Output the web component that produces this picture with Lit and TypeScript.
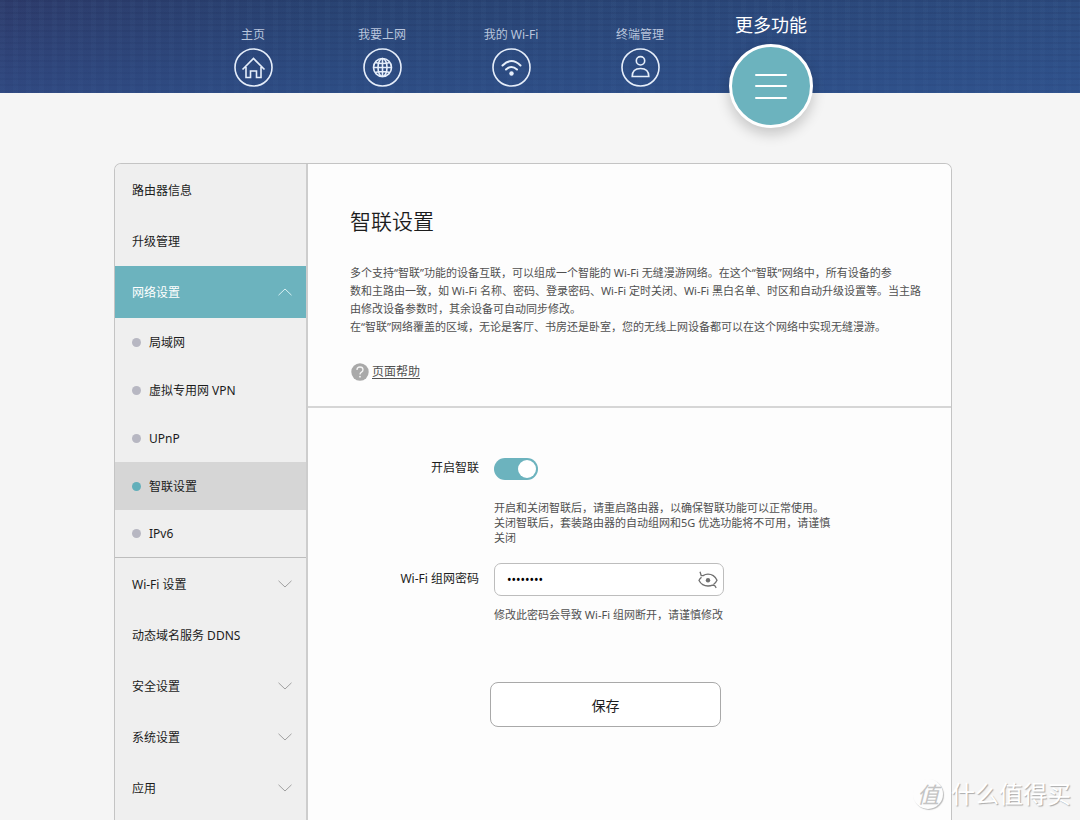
import { LitElement, html, css, svg, nothing } from "lit";
import { customElement, state } from "lit/decorators.js";
import { classMap } from "lit/directives/class-map.js";

interface NavItem {
  label: string;
  icon: unknown;
}

interface MenuItem {
  label: string;
  expandable?: boolean;
  children?: string[];
}

const NAV: NavItem[] = [
  {
    label: "主页",
    icon: svg`<path d="M8.5 21.5 19.5 10.5l11 11M12 19V29.5h4.5V23h6v6.5H27V19" />`,
  },
  {
    label: "我要上网",
    icon: svg`<circle cx="19.5" cy="19.5" r="9" /><ellipse cx="19.5" cy="19.5" rx="4.5" ry="9" /><path d="M19.5 10.5v18M10.5 19.5h18M12 14.5q7.5 2 15 0M12 24.5q7.5-2 15 0" />`,
  },
  {
    label: "我的 Wi-Fi",
    icon: svg`<path d="M10.5 17.5q9-9 18 0M14 21.5q5.5-5 11 0" stroke-linecap="round" stroke-width="2" /><circle class="solid" cx="19.5" cy="25.5" r="2.2" />`,
  },
  {
    label: "终端管理",
    icon: svg`<circle cx="19.5" cy="12.8" r="4.2" /><path d="M11.2 28.500q0-8 8.300-8t8.300 8z" />`,
  },
];

const MENU: MenuItem[] = [
  { label: "路由器信息" },
  { label: "升级管理" },
  {
    label: "网络设置",
    expandable: true,
    children: ["局域网", "虚拟专用网 VPN", "UPnP", "智联设置", "IPv6"],
  },
  { label: "Wi-Fi 设置", expandable: true },
  { label: "动态域名服务 DDNS" },
  { label: "安全设置", expandable: true },
  { label: "系统设置", expandable: true },
  { label: "应用", expandable: true },
];

@customElement("top-nav")
export class TopNav extends LitElement {
  static styles = css`
    :host {
      display: block;
      position: relative;
      z-index: 1;
      height: 93px;
      background:
        linear-gradient(to bottom, transparent, rgba(52, 92, 160, 0.4)),
        repeating-linear-gradient(to bottom, rgba(20, 30, 70, 0.12) 0 2px, transparent 2px 6px),
        repeating-linear-gradient(to right, rgba(90, 130, 175, 0.06) 0 5px, transparent 5px 13px),
        linear-gradient(to right, #2e3c6c, #294372 30%, #2d4c80);
    }
    .items {
      display: flex;
      justify-content: center;
      height: 100%;
      padding-right: 54px;
    }
    .item {
      display: flex;
      flex-direction: column;
      align-items: center;
      width: 129px;
      padding-top: 26px;
      color: #b9c5dc;
      font-size: 12px;
      line-height: 18px;
      text-decoration: none;
    }
    .ring {
      width: 39px;
      height: 39px;
      margin-top: 4px;
      fill: none;
      stroke: #e6eefa;
      stroke-width: 1.6;
    }
    .solid {
      fill: #e6eefa;
      stroke: none;
    }
    .current {
      width: 133px;
      padding-top: 13px;
      color: #fff;
      font-size: 18px;
      line-height: 24px;
    }
    .disc {
      box-sizing: border-box;
      display: grid;
      place-items: center;
      flex: none;
      width: 84px;
      height: 84px;
      margin-top: 7px;
      border: 3px solid #fff;
      border-radius: 50%;
      background: #6cb3be;
      box-shadow: 0 6px 14px rgba(0, 0, 0, 0.2);
    }
    .bars {
      width: 32px;
      height: 28px;
      fill: none;
      stroke: #fff;
      stroke-width: 2;
      stroke-linecap: round;
    }
  `;

  render() {
    return html`
      <nav class="items">
        ${NAV.map(
          (item) => html`
            <a class="item" href="#">
              <span>${item.label}</span>
              <svg class="ring" viewBox="0 0 39 39" aria-hidden="true">
                <circle cx="19.5" cy="19.5" r="18.5" />
                ${item.icon}
              </svg>
            </a>
          `,
        )}
        <a class="item current" href="#" aria-current="page">
          <span>更多功能</span>
          <span class="disc">
            <svg class="bars" viewBox="0 0 32 28" aria-hidden="true">
              <path d="M1 3h30M1 14h30M1 26h30" />
            </svg>
          </span>
        </a>
      </nav>
    `;
  }
}

@customElement("side-menu")
export class SideMenu extends LitElement {
  @state() private selected = "智联设置";

  static styles = css`
    :host {
      display: block;
      box-sizing: border-box;
      border-right: 2px solid #cdcdcd;
      background: #efefef;
    }
    ul {
      margin: 0;
      padding: 0;
      list-style: none;
    }
    button {
      display: flex;
      align-items: center;
      width: 100%;
      border: 0;
      background: none;
      color: #1c1c1c;
      font: inherit;
      text-align: left;
      cursor: pointer;
    }
    .entry {
      height: 51px;
      padding: 0 14px 0 17px;
    }
    .group {
      justify-content: space-between;
    }
    .open {
      height: 52px;
      background: #6cb3be;
      color: #fff;
    }
    .chevron {
      width: 14px;
      height: 8px;
      fill: none;
      stroke: #a0a0a0;
    }
    .open .chevron {
      stroke: #d8f0f3;
      transform: rotate(180deg);
    }
    .sub {
      box-sizing: border-box;
      height: 240px;
      border-bottom: 1px solid #bdbdbd;
    }
    .child {
      gap: 8px;
      height: 48px;
      padding: 0 17px;
    }
    .sub li:last-child .child {
      height: 47px;
    }
    .child::before {
      content: "";
      width: 9px;
      height: 9px;
      border-radius: 50%;
      background: #b7b7c2;
    }
    .chosen {
      background: #d6d6d6;
    }
    .chosen::before {
      background: #62afba;
    }
  `;

  render() {
    return html`
      <ul>
        ${MENU.map(
          (item) => html`
            <li>
              <button
                class=${classMap({ entry: true, group: !!item.expandable, open: !!item.children })}
              >
                ${item.label}
                ${item.expandable
                  ? html`<svg class="chevron" viewBox="0 0 14 8" aria-hidden="true">
                      <path d="M.5.8 7 7 13.5.8" />
                    </svg>`
                  : nothing}
              </button>
              ${item.children
                ? html`<ul class="sub">
                    ${item.children.map(
                      (name) => html`<li>
                        <button
                          class=${classMap({ child: true, chosen: name === this.selected })}
                          @click=${() => (this.selected = name)}
                        >
                          ${name}
                        </button>
                      </li>`,
                    )}
                  </ul>`
                : nothing}
            </li>
          `,
        )}
      </ul>
    `;
  }
}

@customElement("mesh-settings")
export class MeshSettings extends LitElement {
  @state() private reveal = false;

  static styles = css`
    :host {
      display: block;
      background: #fdfdfd;
      color: #1c1c1c;
    }
    .intro {
      padding: 41px 16px 21px 42px;
      border-bottom: 2px solid #d6d6d6;
    }
    h1 {
      margin: 0;
      font-size: 21px;
      font-weight: 350;
      line-height: 32px;
    }
    .about {
      margin: 27px 0 0;
      color: #505050;
      font-size: 11px;
      line-height: 18px;
      white-space: nowrap;
    }
    .help {
      display: inline-flex;
      align-items: center;
      gap: 3px;
      margin: 27px 0 0 1px;
      color: #505050;
      text-decoration: none;
      line-height: 18px;
    }
    .help span {
      text-decoration: underline;
      text-underline-offset: 2px;
    }
    .mark {
      width: 18px;
      height: 18px;
    }
    form {
      display: grid;
      grid-template-columns: 171px 1fr;
      column-gap: 15px;
      padding-top: 49px;
    }
    label {
      line-height: 22px;
      text-align: right;
    }
    .switch {
      appearance: none;
      display: flex;
      align-items: center;
      justify-content: flex-end;
      box-sizing: border-box;
      width: 44px;
      height: 22px;
      margin: 1px 0 0;
      padding: 2px;
      border-radius: 11px;
      background: #bcbcbc;
      cursor: pointer;
    }
    .switch:checked {
      background: #6cb3be;
    }
    .switch::before {
      content: "";
      width: 18px;
      height: 18px;
      border-radius: 50%;
      background: #fff;
    }
    .switch:not(:checked) {
      justify-content: flex-start;
    }
    .hint {
      grid-column: 2;
      margin: 0;
      color: #505050;
      font-size: 11px;
      line-height: 15px;
      white-space: nowrap;
    }
    .mesh {
      margin-top: 20px;
    }
    .secret-label,
    .secret {
      margin-top: 18px;
    }
    .secret-label {
      line-height: 32px;
    }
    .secret {
      display: flex;
      align-items: center;
      box-sizing: border-box;
      width: 230px;
      height: 33px;
      padding: 0 5px 0 12px;
      border: 1px solid #bdbdbd;
      border-radius: 7px;
      background: #fff;
    }
    .secret input {
      flex: 1;
      min-width: 0;
      padding: 0;
      border: 0;
      outline: 0;
      background: none;
      color: #000;
      font: inherit;
    }
    .eye {
      padding: 0;
      border: 0;
      background: none;
      line-height: 0;
      cursor: pointer;
    }
    .eye svg {
      width: 20px;
      height: 18px;
      fill: none;
      stroke: #707070;
      stroke-width: 1.3;
    }
    .eye .pupil {
      fill: #707070;
      stroke: none;
    }
    .warn {
      margin-top: 11px;
    }
    .save {
      grid-column: 2;
      width: 231px;
      height: 45px;
      margin: 60px 0 0 -4px;
      border: 1px solid #a9a9a9;
      border-radius: 8px;
      background: #fff;
      color: #1c1c1c;
      font: inherit;
      font-size: 14px;
      cursor: pointer;
    }
  `;

  render() {
    return html`
      <section class="intro">
        <h1>智联设置</h1>
        <p class="about">
          多个支持“智联”功能的设备互联，可以组成一个智能的 Wi-Fi 无缝漫游网络。在这个“智联”网络中，所有设备的参<br />数和主路由一致，如
          Wi-Fi 名称、密码、登录密码、Wi-Fi 定时关闭、Wi-Fi 黑白名单、时区和自动升级设置等。当主路<br />由修改设备参数时，其余设备可自动同步修改。<br />在“智联”网络覆盖的区域，无论是客厅、书房还是卧室，您的无线上网设备都可以在这个网络中实现无缝漫游。
        </p>
        <a class="help" href="#">
          <svg class="mark" viewBox="0 0 18 18" aria-hidden="true">
            <circle cx="9" cy="9" r="8.7" fill="#a9a9a9" />
            <path
              d="M6 7q0-3 3-3t3 2.700q0 1.500-1.500 2.400T9 11.500"
              fill="none"
              stroke="#f4f4f4"
              stroke-width="1.3"
            />
            <circle cx="9" cy="13.7" r=".9" fill="#f4f4f4" />
          </svg>
          <span>页面帮助</span>
        </a>
      </section>
      <form @submit=${(e: Event) => e.preventDefault()}>
        <label for="mesh">开启智联</label>
        <input class="switch" id="mesh" type="checkbox" role="switch" checked />
        <p class="hint mesh">
          开启和关闭智联后，请重启路由器，以确保智联功能可以正常使用。<br />关闭智联后，套装路由器的自动组网和5G
          优选功能将不可用，请谨慎<br />关闭
        </p>
        <label class="secret-label" for="secret">Wi-Fi 组网密码</label>
        <div class="secret">
          <input
            id="secret"
            type=${this.reveal ? "text" : "password"}
            value="12345678"
            autocomplete="off"
          />
          <button
            class="eye"
            type="button"
            aria-label="显示密码"
            @click=${() => (this.reveal = !this.reveal)}
          >
            <svg viewBox="0 0 20 18" aria-hidden="true">
              <path
                d="M2 .8 3.200 4.500 5.200 4.600Q7.200 3.200 10 3.200q6 0 9 6-1 2.300-3.500 4.200M3.500 6.200Q1.500 8 1 9.500 4 15 10 15q2.500 0 4.500-.8l2.200.3 1.500 2.300"
              />
              <circle class="pupil" cx="10" cy="9.2" r="2.2" />
            </svg>
          </button>
        </div>
        <p class="hint warn">修改此密码会导致 Wi-Fi 组网断开，请谨慎修改</p>
        <button class="save" type="submit">保存</button>
      </form>
    `;
  }
}

@customElement("app-root")
export class AppRoot extends LitElement {
  static styles = css`
    :host {
      display: flex;
      flex-direction: column;
      position: relative;
      min-height: 100vh;
      background: #f5f5f5;
      font-family: "Noto Sans", "Noto Sans CJK SC", sans-serif;
      font-size: 12px;
    }
    main {
      display: grid;
      grid-template-columns: 193px 1fr;
      flex: 1;
      margin: 70px 128px 0 114px;
      border: 1px solid #c4c4c4;
      border-bottom: 0;
      border-radius: 7px 7px 0 0;
      overflow: hidden;
    }
    .stamp {
      position: absolute;
      right: 9px;
      bottom: 8px;
      display: flex;
      align-items: center;
      gap: 8px;
      color: #fff;
      font-size: 24px;
      line-height: 36px;
      text-shadow: 1px 1px 1px #aaa;
      pointer-events: none;
    }
    .seal {
      display: grid;
      place-items: center;
      width: 30px;
      height: 30px;
      border-radius: 50%;
      box-shadow: 1px 1px 1px #bbb;
      color: #c4c4c4;
      font-size: 22px;
      font-style: italic;
      line-height: 30px;
      text-shadow: none;
    }
  `;

  render() {
    return html`
      <top-nav></top-nav>
      <main>
        <side-menu></side-menu>
        <mesh-settings></mesh-settings>
      </main>
      <div class="stamp"><span class="seal">值</span><span>什么值得买</span></div>
    `;
  }
}
